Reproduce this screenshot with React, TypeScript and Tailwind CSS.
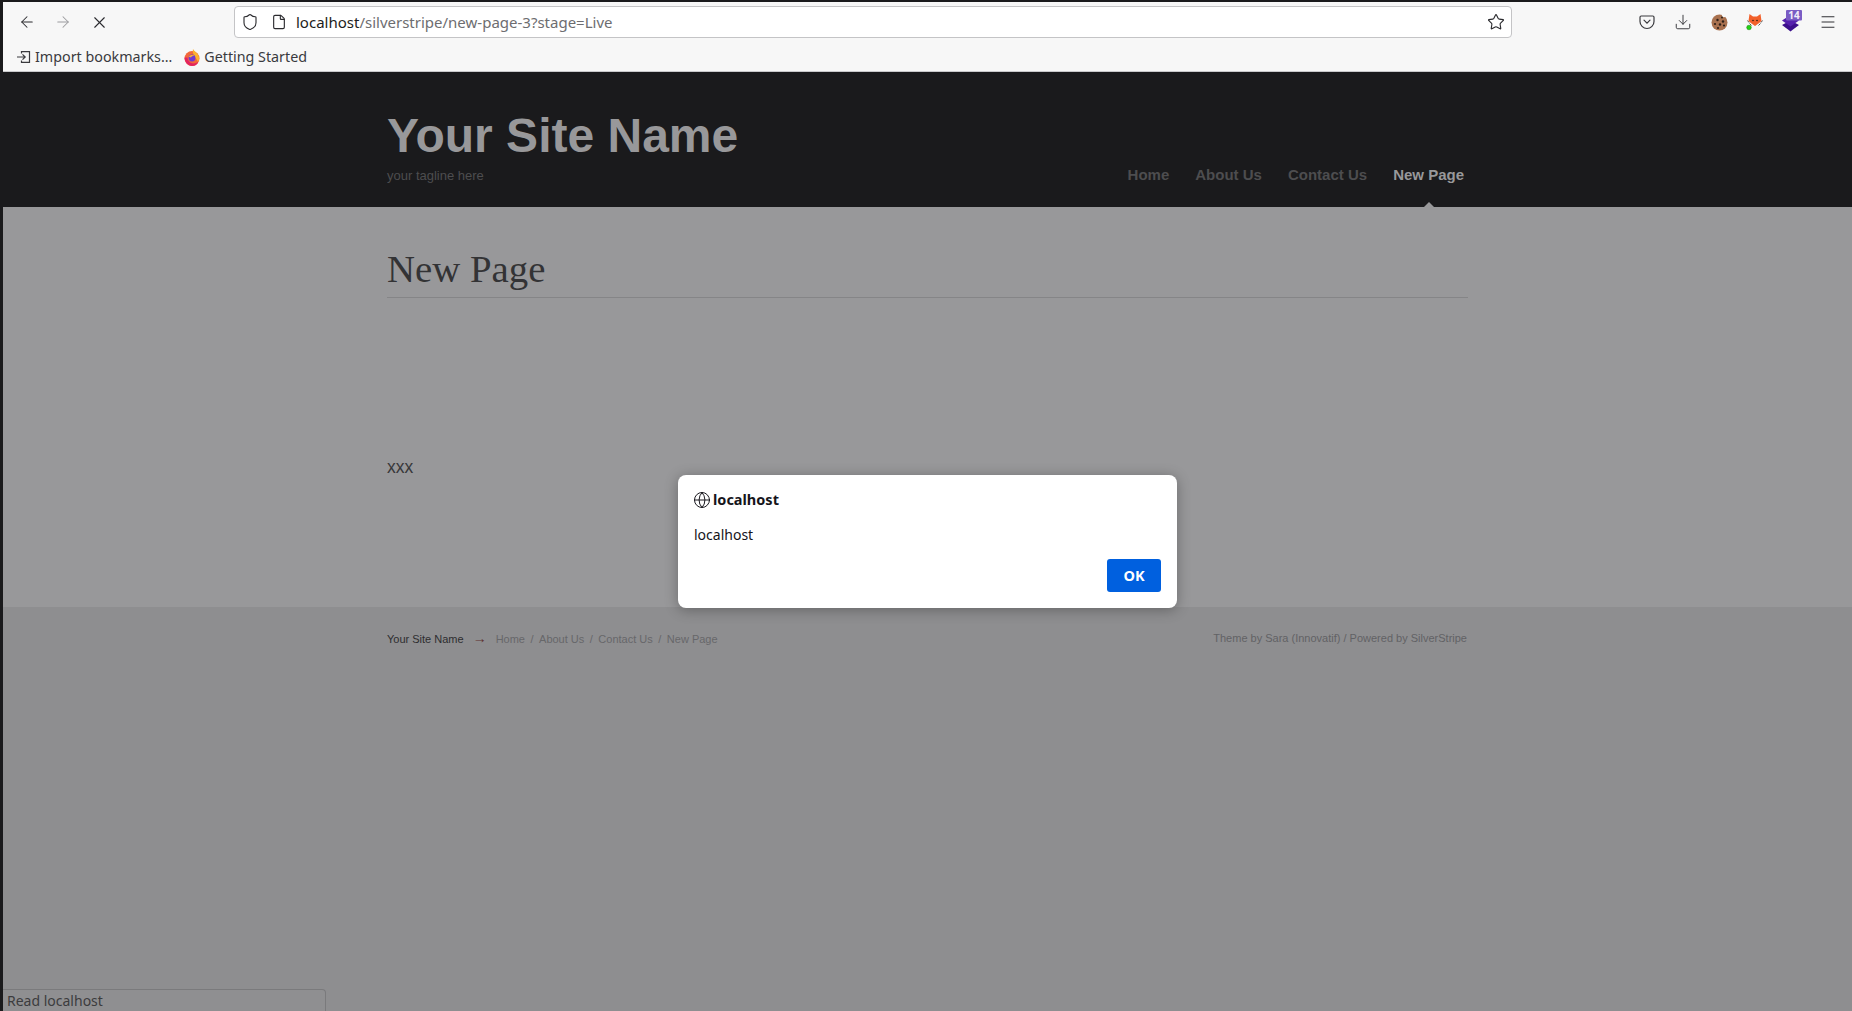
import { ArrowLeft, ArrowRight, Download, File, Globe, Menu, Shield, Star, X } from 'lucide-react'

const uiFont = "font-['Noto_Sans',sans-serif]"

function ImportIcon() {
  return (
    <svg width="16" height="16" viewBox="0 0 16 16" fill="none" stroke="#3a3a3e" strokeWidth="1.2">
      <path d="M5.500 4.500V2.600h8v10.800h-8V11.500" />
      <path d="M1 8h8M6.500 5.400 9.200 8l-2.700 2.600" />
    </svg>
  )
}

function FirefoxIcon() {
  return (
    <svg width="16" height="18" viewBox="0 0 16 18">
      <circle cx="8" cy="10.500" r="7.500" fill="#f2683a" />
      <path d="M9 1c1 2 4 3.500 5.500 6.500 1 3 .5 5-.5 6.500-1-3-3.500-5-4.500-7.500C9 5 8.500 3 9 1Z" fill="#fdb22e" />
      <path d="M.5 9.500c0 4.500 3.500 8.500 7.500 8.500 3 0 5.500-1.500 6.500-4.500-2 2-5 2.500-7.500 1.500-2-1-3.500-3-3.500-5.500l-3 0Z" fill="#e3245f" />
      <circle cx="8" cy="10" r="3.400" fill="#6f3bd1" />
      <path d="M4.800 8.500C6 6.800 9 6.400 10.500 8 9 7.800 7.500 8.200 7 9.500Z" fill="#fdb22e" />
    </svg>
  )
}

function PocketIcon() {
  return (
    <svg width="16" height="16" viewBox="0 0 16 16" fill="none" stroke="#3a3a3e" strokeWidth="1.2">
      <path d="M2.200 2h11.600c.7 0 1.200.5 1.200 1.200v4.300a7 7 0 0 1-14 0V3.200C1 2.500 1.500 2 2.200 2Z" />
      <path d="m5 6.200 3 3 3-3" strokeLinecap="round" />
    </svg>
  )
}

function CookieIcon() {
  return (
    <svg width="17" height="17" viewBox="0 0 17 17">
      <circle cx="8.500" cy="8.500" r="8" fill="#a8714f" />
      <circle cx="13" cy="1" r="2.200" fill="#f7f7f7" />
      <circle cx="11" cy="3.500" r="1" fill="#2d1f18" />
      <circle cx="6.500" cy="6" r="1.200" fill="#2d1f18" />
      <circle cx="12" cy="7.500" r="1.200" fill="#2d1f18" />
      <circle cx="4" cy="10" r="1.100" fill="#2d1f18" />
      <circle cx="9" cy="10.500" r="1.200" fill="#2d1f18" />
      <circle cx="13" cy="11.500" r="1.100" fill="#2d1f18" />
      <circle cx="7" cy="14" r="1.100" fill="#2d1f18" />
    </svg>
  )
}

function FoxIcon() {
  return (
    <svg width="18" height="18" viewBox="0 0 18 18">
      <path d="M3.500 1 7 3.500h4L14.500 1l1 7-3 2.500L9 13l-3.500-2.500-3-2.500Z" fill="#f2602b" />
      <path d="M1.500 7.500 3 9.500M16.500 7.500 15 9.500M3.500 10.500l2 2M14.500 10.500l-2 2" stroke="#444" strokeWidth=".9" />
      <circle cx="7" cy="7.500" r=".8" fill="#2a1a10" />
      <circle cx="11" cy="7.500" r=".8" fill="#2a1a10" />
      <circle cx="3" cy="14.500" r="2.300" fill="#22d414" stroke="#167a0d" strokeWidth=".5" />
    </svg>
  )
}

function StackIcon() {
  return (
    <svg width="24" height="24" viewBox="0 0 24 24">
      <path d="M2 16l6 4.500 2.500 2 2.500-2 6-4.500-8.500-4.500Z" fill="#3c0f8c" />
      <path d="M2 11.500 10.500 6l8.500 5.500-8.500 6Z" fill="#5520ad" />
      <rect x="6" y="1" width="16" height="10.500" rx="1" fill="#7a5cc4" />
      <text x="14" y="10" textAnchor="middle" fontSize="10" fontWeight="700" fill="#f1edf9" fontFamily="Noto Sans, sans-serif">14</text>
    </svg>
  )
}

function Toolbar() {
  return (
    <div className={`${uiFont} h-[70px] shrink-0 bg-[#f7f7f7] border-b border-[#c9c9cb]`}>
      <div className="h-[40px] flex items-center">
        <div className="w-[231px] flex items-center pl-[15px] gap-[18px]">
          <ArrowLeft size={18} strokeWidth={1.4} color="#2b2b2f" />
          <ArrowRight size={18} strokeWidth={1.4} color="#9c9c9f" />
          <X size={19} strokeWidth={1.4} color="#2b2b2f" />
        </div>
        <div className="w-[1278px] h-[32px] bg-white border border-[#c4c4c6] rounded-[4px] flex items-center pl-[6px] pr-[6px]">
          <Shield size={18} strokeWidth={1.5} color="#2b2b2f" />
          <File size={16} strokeWidth={1.7} color="#2b2b2f" className="ml-[12px]" />
          <span className="ml-[9px] text-[15px] leading-none text-[#1d1d20]">
            localhost<span className="text-[#6d6d70]">/silverstripe/new-page-3?stage=Live</span>
          </span>
          <Star size={18} strokeWidth={1.5} color="#2b2b2f" className="ml-auto" />
        </div>
        <div className="flex items-center ml-[117px]">
          <div className="w-[36px] flex justify-center"><PocketIcon /></div>
          <div className="w-[36px] flex justify-center"><Download size={18} strokeWidth={1.3} color="#3a3a3e" /></div>
          <div className="w-[36px] flex justify-center"><CookieIcon /></div>
          <div className="w-[36px] flex justify-center"><FoxIcon /></div>
          <div className="w-[38px] flex justify-center -mt-[2px]"><StackIcon /></div>
          <div className="w-[33px] flex justify-center"><Menu size={18} strokeWidth={1.3} color="#2b2b2f" /></div>
        </div>
      </div>
      <div className="h-[29px] flex items-center pl-[13px] text-[14.300px] text-[#3a3a3e]">
        <ImportIcon />
        <span className="ml-[3px]">Import bookmarks…</span>
        <span className="ml-[12px]"><FirefoxIcon /></span>
        <span className="ml-[4px]">Getting Started</span>
      </div>
    </div>
  )
}

function Column({ children, className }: { children: React.ReactNode; className?: string }) {
  return <div className={`w-[1081px] ml-[384px] ${className ?? ''}`}>{children}</div>
}

const navItems = ['Home', 'About Us', 'Contact Us']
const footerLinks = ['Home', 'About Us', 'Contact Us', 'New Page']

export default function App() {
  return (
    <div className="relative w-[1852px] h-[1011px] overflow-hidden bg-[#1a1a1c] pl-[3px] pt-[2px] flex flex-col font-['Liberation_Sans',sans-serif]">
      <Toolbar />

      <header className="h-[135px] shrink-0 bg-[#1a1a1c]">
        <Column className="flex justify-between">
          <div>
            <h1 className="mt-[43px] text-[48px] leading-[42px] font-bold text-[#98989a]">Your Site Name</h1>
            <p className="mt-[11px] text-[13px] leading-[16px] text-[#4d4d4f]">your tagline here</p>
          </div>
          <nav className="flex items-start gap-[26px] mt-[93px] pr-[4px] text-[15px] leading-[20px] font-bold text-[#4d4d4f]">
            {navItems.map((item) => (
              <a key={item}>{item}</a>
            ))}
            <a className="relative text-[#98989a]">
              New Page
              <span className="absolute left-1/2 -translate-x-1/2 top-[37px] w-0 h-0 border-x-[5px] border-x-transparent border-b-[5px] border-b-[#98989a]" />
            </a>
          </nav>
        </Column>
      </header>

      <main className="h-[400px] shrink-0 bg-[#98989a]">
        <Column>
          <div className="pt-[39px] pb-[6px] border-b border-[#858587]">
            <h2 className="text-[38.800px] leading-[45px] text-[#333335] font-['Liberation_Serif',serif]">New Page</h2>
          </div>
          <p className="mt-[159px] text-[17.500px] leading-[20px] text-[#38383a]">xxx</p>
        </Column>
      </main>

      <footer className="flex-1 bg-[#8e8e90]">
        <Column className="flex justify-between pt-[25px] text-[11px] leading-[14px]">
          <div className="flex items-center">
            <span className="text-[#2d2d2f]">Your Site Name</span>
            <span className="ml-[9px] text-[14px] leading-[12px] -mt-[2px] text-[#5e3030]">→</span>
            <div className="ml-[9px] flex text-[#67676a]">
              {footerLinks.map((link, i) => (
                <span key={link}>
                  {link}
                  {i < footerLinks.length - 1 && <span className="mx-[5.500px]">/</span>}
                </span>
              ))}
            </div>
          </div>
          <p className="pr-[1px] -mt-[1px] text-[#626265]">Theme by Sara (Innovatif) / Powered by SilverStripe</p>
        </Column>
      </footer>

      {/* status panel */}
      <div className={`${uiFont} absolute left-[3px] bottom-0 w-[323px] h-[22px] border-t border-r border-[#7a7a7c] rounded-tr-[4px] bg-[#8f8f91] pl-[4px] text-[14px] leading-[22px] text-[#3c3c3e]`}>
        Read localhost
      </div>

      {/* alert dialog */}
      <div className={`${uiFont} absolute left-[678px] top-[475px] w-[499px] h-[133px] bg-white rounded-[8px] shadow-[0_2px_14px_rgba(0,0,0,0.3)] px-[16px] pt-[15px] text-[#15141a]`}>
        <div className="flex items-center gap-[2px] h-[20px]">
          <Globe size={18} strokeWidth={1.3} color="#15141a" className="-ml-[1px]" />
          <span className="text-[14.500px] font-bold">localhost</span>
        </div>
        <p className="mt-[15px] text-[14px] leading-[20px]">localhost</p>
        <div className="flex justify-end mt-[14px]">
          <button className="w-[54px] h-[33px] rounded-[3px] bg-[#0060df] text-white text-[14.500px] font-bold">OK</button>
        </div>
      </div>
    </div>
  )
}
